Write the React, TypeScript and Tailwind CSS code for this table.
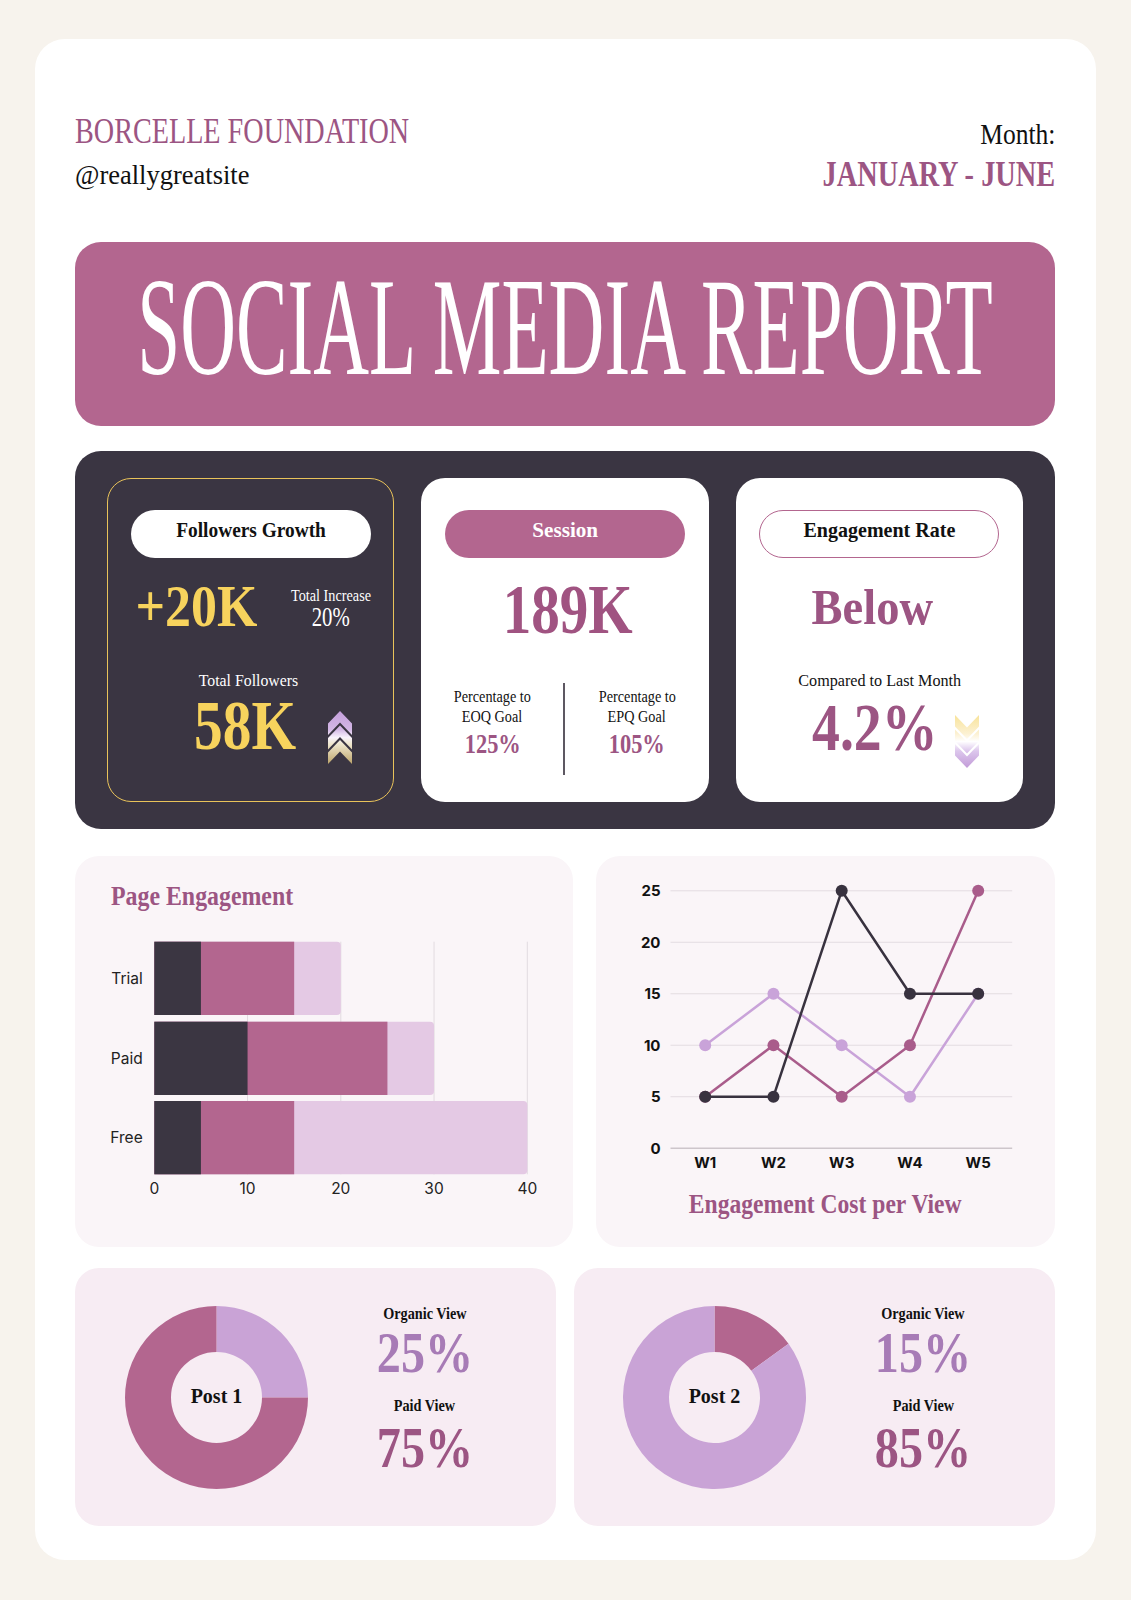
import React from "react";

const S = ({ c, children }: { c: string; children: React.ReactNode }) => (
  <span className={`inline-block whitespace-nowrap ${c}`}>{children}</span>
);

const Pill = ({ label, cls, sc }: { label: string; cls: string; sc: string }) => (
  <div className={`mx-auto flex h-[48px] w-[240px] items-center justify-center rounded-full pb-[8px] ${cls}`}>
    <S c={`text-[22px] leading-[24px] font-bold ${sc}`}>{label}</S>
  </div>
);

const Chevrons = ({ down, className }: { down?: boolean; className: string }) => {
  const id = down ? "chev-down" : "chev-up";
  const pts = (o: number) =>
    down
      ? `11,${55 - o} 22,${42 - o} 22,${30 - o} 11,${43 - o} 0,${30 - o} 0,${42 - o}`
      : `11,${o} 22,${o + 13} 22,${o + 25} 11,${o + 12} 0,${o + 25} 0,${o + 13}`;
  return (
    <svg viewBox="0 0 22 55" width={24} height={53} preserveAspectRatio="none" className={`block shrink-0 ${className}`}>
      <defs>
        <linearGradient id={id} x1="0" y1="0" x2="0" y2="55" gradientUnits="userSpaceOnUse">
          {down ? (
            <>
              <stop offset="0" stopColor="#f8e39a" />
              <stop offset="0.35" stopColor="#fcf1d2" />
              <stop offset="0.5" stopColor="#ffffff" />
              <stop offset="0.68" stopColor="#dcc6ec" />
              <stop offset="1" stopColor="#c29bd8" />
            </>
          ) : (
            <>
              <stop offset="0" stopColor="#c49fdc" />
              <stop offset="0.35" stopColor="#d3b7e5" />
              <stop offset="0.5" stopColor="#f8f2fb" />
              <stop offset="0.62" stopColor="#efe7cf" />
              <stop offset="1" stopColor="#bca46a" />
            </>
          )}
        </linearGradient>
      </defs>
      {[0, 15, 30].map((o) => (
        <polygon key={o} points={pts(o)} fill={`url(#${id})`} />
      ))}
    </svg>
  );
};

const GoalCol = ({ w, l2, v }: { w: string; l2: string; v: string }) => (
  <div className={`flex flex-col items-center ${w}`}>
    <S c="scale-x-[0.89] text-[16px] leading-[20px] text-[#111]">Percentage to</S>
    <S c="scale-x-[0.89] text-[16px] leading-[20px] text-[#111]">{l2}</S>
    <S c="mt-[2.5px] scale-x-[0.83] text-[27px] leading-[30px] font-bold text-[#9c5583]">{v}</S>
  </div>
);

const bars = [
  { label: "Trial", y: 29.7, d: 5, p: 15, l: 20 },
  { label: "Paid", y: 109.7, d: 10, p: 25, l: 30 },
  { label: "Free", y: 189, d: 5, p: 15, l: 40 },
];

const BarChart = () => {
  const x0 = 79.3;
  const u = 9.325;
  return (
    <svg width={498} height={300} className="block" fontFamily="Inter, sans-serif">
      {[1, 2, 3, 4].map((k) => (
        <line key={k} x1={x0 + k * 10 * u} x2={x0 + k * 10 * u} y1={29.7} y2={262.3} stroke="#e2dbe0" strokeWidth={1} />
      ))}
      {bars.map((b) => (
        <g key={b.label}>
          <rect x={x0} y={b.y} width={b.l * u} height={73.3} rx={4} fill="#e4c9e4" />
          <rect x={x0} y={b.y} width={b.p * u} height={73.3} fill="#b3668f" />
          <rect x={x0} y={b.y} width={b.d * u} height={73.3} fill="#3b3642" />
          <text x={67.7} y={b.y + 42.2} textAnchor="end" fontSize={15.5} fill="#222">
            {b.label}
          </text>
        </g>
      ))}
      {[0, 10, 20, 30, 40].map((v) => (
        <text key={v} x={x0 + v * u} y={281.7} textAnchor="middle" fontSize={15.5} fill="#222">
          {v}
        </text>
      ))}
    </svg>
  );
};

const X = [109.2, 177.45, 245.7, 313.95, 382.2];
const yv = (v: number) => 292.2 - v * 10.296;
const series = [
  { c: "#c9a3d9", d: [10, 15, 10, 5, 15] },
  { c: "#a95c8b", d: [5, 10, 5, 10, 25] },
  { c: "#38323f", d: [5, 5, 25, 15, 15] },
];

const LineChart = () => (
  <svg width={459.5} height={333} className="block" fontFamily="Inter, sans-serif">
    {[0, 5, 10, 15, 20, 25].map((v) => (
      <g key={v}>
        <line x1={74.5} x2={416.2} y1={yv(v)} y2={yv(v)} stroke={v === 0 ? "#cdc6cb" : "#e3dce1"} strokeWidth={v === 0 ? 1.5 : 1} />
        <text x={64.5} y={yv(v) + 5.4} textAnchor="end" fontSize={15} fontWeight={700} fill="#111">
          {v}
        </text>
      </g>
    ))}
    {["W1", "W2", "W3", "W4", "W5"].map((w, i) => (
      <text key={w} x={X[i]} y={311.6} textAnchor="middle" fontSize={15} fontWeight={700} fill="#111">
        {w}
      </text>
    ))}
    {series.map((s) => (
      <g key={s.c}>
        <polyline points={s.d.map((v, i) => `${X[i]},${yv(v)}`).join(" ")} fill="none" stroke={s.c} strokeWidth={2.5} strokeLinejoin="round" />
        {s.d.map((v, i) => (
          <circle key={i} cx={X[i]} cy={yv(v)} r={6} fill={s.c} />
        ))}
      </g>
    ))}
  </svg>
);

const arc = (cx: number, cy: number, R: number, r: number, a0: number, a1: number) => {
  const p = (rad: number, a: number) => [cx + rad * Math.sin((a * Math.PI) / 180), cy - rad * Math.cos((a * Math.PI) / 180)];
  const large = a1 - a0 > 180 ? 1 : 0;
  const [x0, y0] = p(R, a0);
  const [x1, y1] = p(R, a1);
  const [x2, y2] = p(r, a1);
  const [x3, y3] = p(r, a0);
  return `M${x0} ${y0} A${R} ${R} 0 ${large} 1 ${x1} ${y1} L${x2} ${y2} A${r} ${r} 0 ${large} 0 ${x3} ${y3}Z`;
};

const DonutCard = ({ post, a, colA, colB, organic, paid }: { post: string; a: number; colA: string; colB: string; organic: string; paid: string }) => (
  <div className="flex items-start rounded-[24px] bg-[#f7ecf3] pl-[49.5px]">
    <svg width={183} height={183} className="mt-[37.5px] block shrink-0">
      <path d={arc(91.5, 91.5, 91.5, 45.5, 0, a)} fill={colA} />
      <path d={arc(91.5, 91.5, 91.5, 45.5, a, 360)} fill={colB} />
      <text x={91.5} y={96.5} textAnchor="middle" fontSize={20} fontWeight={700} fill="#111" fontFamily="'Liberation Serif', serif">
        {post}
      </text>
    </svg>
    <div className="ml-[37px] flex w-[160px] shrink-0 flex-col items-center pt-[36.5px]">
      <S c="scale-x-[0.89] text-[16px] leading-[18px] font-bold text-[#111]">Organic View</S>
      <S c="mt-[5px] scale-x-[0.83] text-[58px] leading-[50px] font-bold text-[#a77bb6]">{organic}</S>
      <S c="mt-[19.5px] scale-x-[0.89] text-[16px] leading-[18px] font-bold text-[#111]">Paid View</S>
      <S c="mt-[7.5px] scale-x-[0.83] text-[58px] leading-[50px] font-bold text-[#9c5583]">{paid}</S>
    </div>
  </div>
);

export default function App() {
  return (
    <div className="min-h-[1600px] bg-[#f7f3ed] px-[35px] pt-[39px] pb-[40px] font-['Liberation_Serif','Times_New_Roman',serif]">
      <div className="rounded-[30px] bg-white pt-[73px] pr-[41px] pb-[34px] pl-[40px]">
        <header className="flex h-[130px] items-start justify-between">
          <div className="flex flex-col items-start">
            <S c="origin-left scale-x-[0.805] text-[35px] leading-[40px] text-[#9c5583]">BORCELLE FOUNDATION</S>
            <S c="mt-[8px] text-[26.5px] leading-[30px] text-[#111]">@reallygreatsite</S>
          </div>
          <div className="flex flex-col items-end pt-[5px]">
            <S c="origin-right scale-x-[0.88] text-[29px] leading-[34px] text-[#111]">Month:</S>
            <S c="mt-[4px] origin-right scale-x-[0.81] text-[35px] leading-[40px] font-bold text-[#9c5583]">JANUARY - JUNE</S>
          </div>
        </header>

        <div className="flex h-[184px] items-center justify-center rounded-[26px] bg-[#b3668f] pb-[14px]">
          <S c="scale-x-[0.552] text-[140px] leading-[140px] text-white">SOCIAL MEDIA REPORT</S>
        </div>

        <div className="mt-[25px] grid h-[378px] grid-cols-3 gap-[27px] rounded-[26px] bg-[#3a3542] px-[32px] py-[27px]">
          <div className="flex flex-col rounded-[24px] border-[1.5px] border-[#e9c35a] pt-[30.5px]">
            <Pill label="Followers Growth" cls="bg-white text-[#111]" sc="scale-x-[0.88]" />
            <div className="mt-[18px] grid grid-cols-[176px_93px]">
              <div className="flex flex-col items-center">
                <S c="scale-x-[0.865] text-[60px] leading-[60px] font-bold text-[#f7d35d]">+20K</S>
              </div>
              <div className="mt-[12px] flex flex-col items-center text-white">
                <S c="scale-x-[0.89] text-[16px] leading-[16px]">Total Increase</S>
                <S c="scale-x-[0.77] text-[27px] leading-[27px]">20%</S>
              </div>
            </div>
            <div className="mt-[36px] flex justify-center pr-[4px]">
              <S c="scale-x-[0.93] text-[17px] leading-[18px] text-white">Total Followers</S>
            </div>
            <div className="mt-[1.5px] flex items-start pl-[86px]">
              <div className="w-[102px] shrink-0">
                <S c="origin-left scale-x-[0.82] text-[70px] leading-[70px] font-bold text-[#f7d35d]">58K</S>
              </div>
              <Chevrons className="mt-[20px] ml-[32px]" />
            </div>
          </div>

          <div className="flex flex-col rounded-[24px] bg-white pt-[32px]">
            <Pill label="Session" cls="bg-[#b3668f] text-white" sc="scale-x-[0.96]" />
            <div className="mt-[16.5px] flex justify-center pl-[5px]">
              <S c="scale-x-[0.815] text-[70px] leading-[70px] font-bold text-[#a05381]">189K</S>
            </div>
            <div className="mt-[42px] flex items-start">
              <GoalCol w="w-[142px]" l2="EOQ Goal" v="125%" />
              <div className="mt-[-4px] h-[92px] w-[2px] shrink-0 bg-[#5d5862]" />
              <GoalCol w="w-[143px]" l2="EPQ Goal" v="105%" />
            </div>
          </div>

          <div className="flex flex-col rounded-[24px] bg-white pt-[32px]">
            <Pill label="Engagement Rate" cls="border-[1.5px] border-[#b3668f] bg-white text-[#111]" sc="scale-x-[0.91]" />
            <div className="mt-[24px] flex justify-center pr-[14px]">
              <S c="scale-x-[0.93] text-[50px] leading-[50px] font-bold text-[#9c5583]">Below</S>
            </div>
            <div className="mt-[39.5px] flex justify-center">
              <S c="scale-x-[0.95] text-[17px] leading-[18px] text-[#111]">Compared to Last Month</S>
            </div>
            <div className="mt-[3.5px] flex items-start pl-[76px]">
              <div className="w-[120px] shrink-0">
                <S c="origin-left scale-x-[0.82] text-[68px] leading-[68px] font-bold text-[#9c5583]">4.2%</S>
              </div>
              <Chevrons down className="mt-[21.5px] ml-[23.5px]" />
            </div>
          </div>
        </div>

        <div className="mt-[26.5px] grid h-[391px] grid-cols-[498px_1fr] gap-[22.5px]">
          <div className="rounded-[24px] bg-[#faf5f8] pt-[25.5px]">
            <div className="pl-[36px]">
              <S c="origin-left scale-x-[0.9] text-[26.5px] leading-[30px] font-bold text-[#9c5583]">Page Engagement</S>
            </div>
            <BarChart />
          </div>
          <div className="flex flex-col rounded-[24px] bg-[#faf5f8]">
            <LineChart />
            <div className="flex justify-center">
              <S c="scale-x-[0.89] text-[26.5px] leading-[30px] font-bold text-[#9c5583]">Engagement Cost per View</S>
            </div>
          </div>
        </div>

        <div className="mt-[21.5px] grid h-[258px] grid-cols-2 gap-[17.5px]">
          <DonutCard post="Post 1" a={90} colA="#c9a3d6" colB="#b3668f" organic="25%" paid="75%" />
          <DonutCard post="Post 2" a={54} colA="#b3668f" colB="#c9a3d6" organic="15%" paid="85%" />
        </div>
      </div>
    </div>
  );
}
